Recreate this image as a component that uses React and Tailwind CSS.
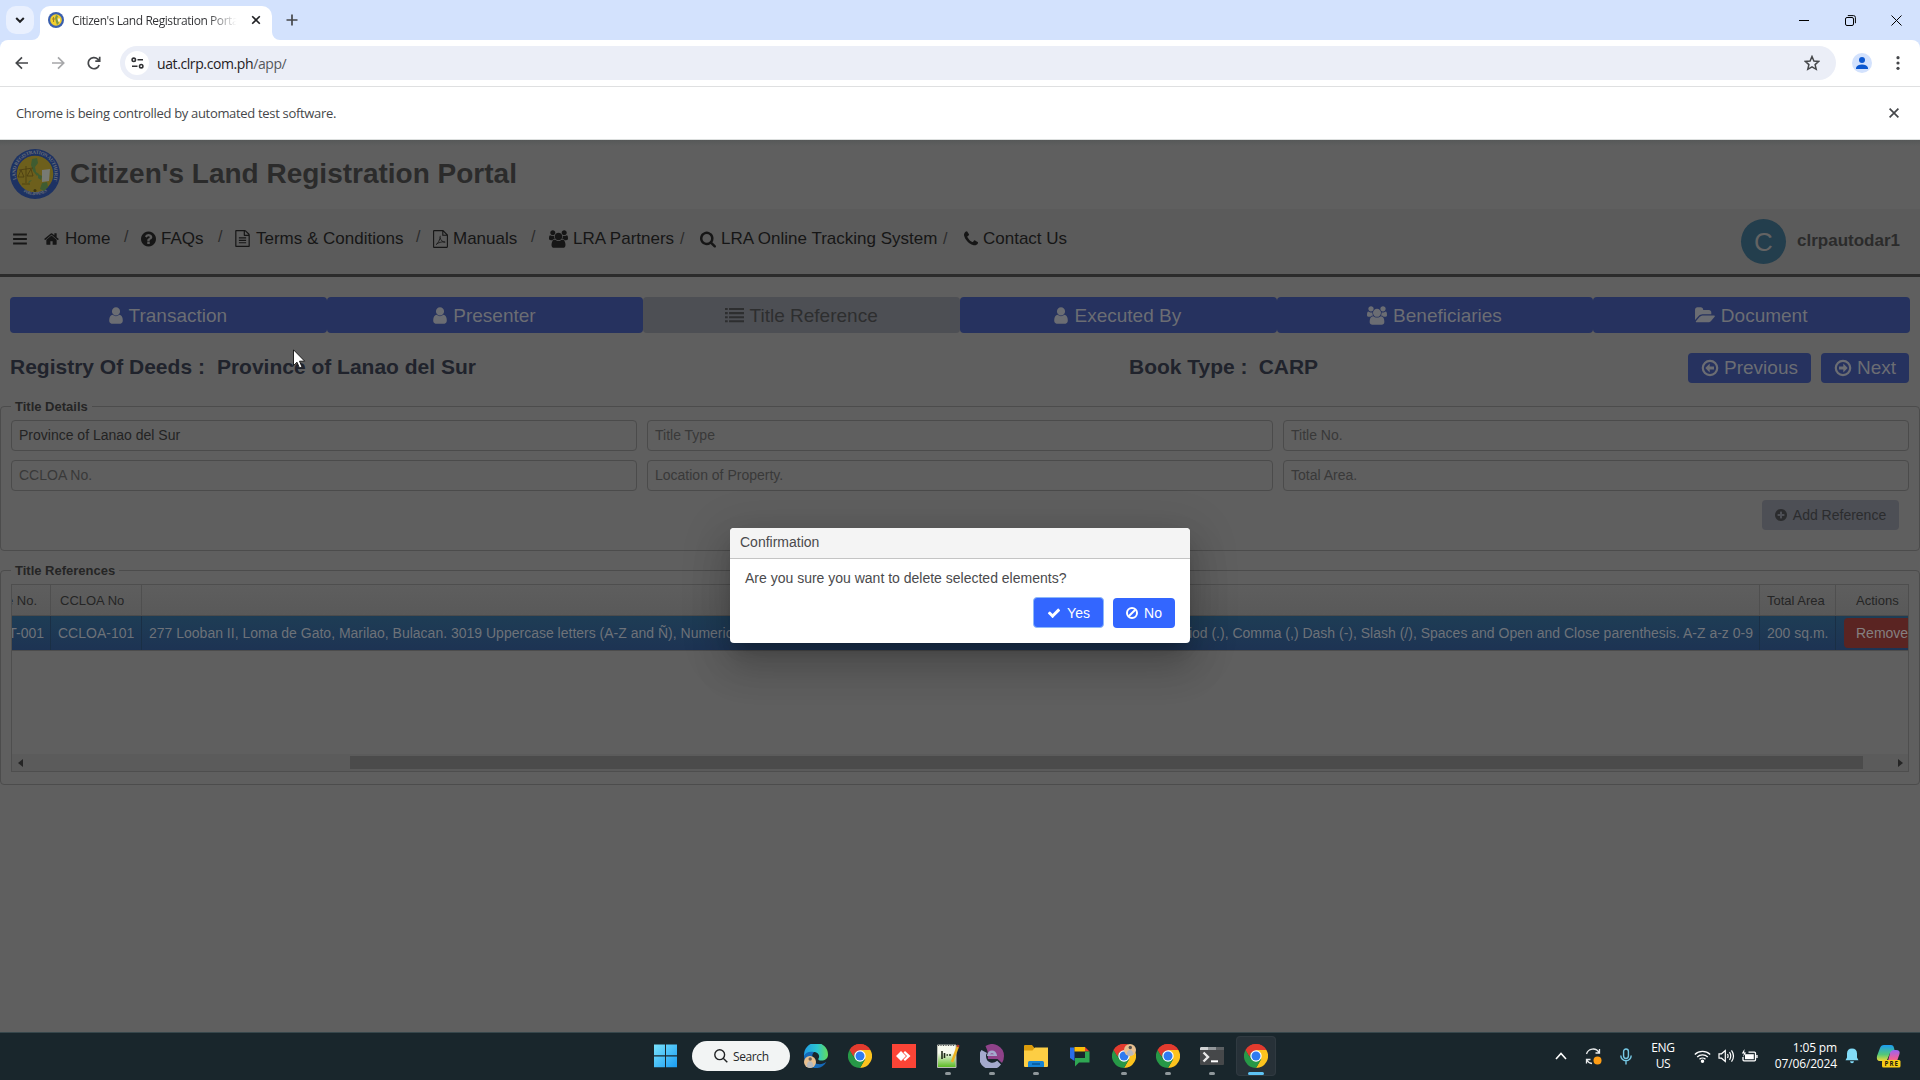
import React from "react";

const PATHS = {
  home: ["64 0 1664 1792", "M1472 992v480q0 26-19 45t-45 19h-384v-384h-256v384h-384q-26 0-45-19t-19-45v-480q0-1 .5-3t.5-3l575-474 575 474q1 2 1 6zm223-69l-62 74q-8 9-21 11h-3q-13 0-21-7l-692-577-692 577q-12 8-24 7-13-2-21-11l-62-74q-8-10-7-23.5t11-21.5l719-599q32-26 76-26t76 26l244 204v-195q0-14 9-23t23-9h192q14 0 23 9t9 23v408l219 182q10 8 11 21.5t-7 23.5z"],
  question: ["128 0 1536 1792", "M1024 1376v-192q0-14-9-23t-23-9h-192q-14 0-23 9t-9 23v192q0 14 9 23t23 9h192q14 0 23-9t9-23zm256-672q0-88-55.5-163t-138.5-116-170-41q-243 0-371 213-15 24 8 42l132 100q7 6 19 6 16 0 25-12 53-68 86-92 34-24 86-24 48 0 85.5 26t37.5 59q0 38-20 61t-68 45q-63 28-115.5 86.5t-52.5 125.5v36q0 14 9 23t23 9h192q14 0 23-9t9-23q0-19 21.5-49.5t54.5-49.5q32-18 49-28.5t46-35 44.5-48 28-60.5 12.5-81zm384 192q0 209-103 385.5t-279.5 279.5-385.5 103-385.5-103-279.5-279.5-103-385.5 103-385.5 279.5-279.5 385.5-103 385.5 103 279.5 279.5 103 385.5z"],
  file: ["128 0 1536 1792", "M1596 380q28 28 48 76t20 88v1152q0 40-28 68t-68 28h-1344q-40 0-68-28t-28-68v-1600q0-40 28-68t68-28h896q40 0 88 20t76 48zm-444-244v376h376q-10-29-22-41l-313-313q-12-12-41-22zm384 1528v-1024h-416q-40 0-68-28t-28-68v-416h-768v1536h1280zm-1024-864q0-14 9-23t23-9h704q14 0 23 9t9 23v64q0 14-9 23t-23 9h-704q-14 0-23-9t-9-23v-64zm736 224q14 0 23 9t9 23v64q0 14-9 23t-23 9h-704q-14 0-23-9t-9-23v-64q0-14 9-23t23-9h704zm0 256q14 0 23 9t9 23v64q0 14-9 23t-23 9h-704q-14 0-23-9t-9-23v-64q0-14 9-23t23-9h704z"],
  users: ["0 0 1920 1792", "M593 896q-162 5-265 128h-134q-82 0-138-40.5t-56-118.5q0-353 124-353 6 0 43.5 21t97.5 42.5 119 21.5q67 0 133-23-5 37-5 66 0 139 81 256zm1071 637q0 120-73 189.5t-194 69.5h-874q-121 0-194-69.5t-73-189.5q0-53 3.5-103.5t14-109 26.5-108.5 43-97.5 62-81 85.5-53.5 111.5-20q10 0 43 21.5t73 48 107 48 135 21.5 135-21.5 107-48 73-48 43-21.5q61 0 111.5 20t85.5 53.5 62 81 43 97.5 26.5 108.5 14 109 3.5 103.5zm-1024-1277q0 106-75 181t-181 75-181-75-75-181 75-181 181-75 181 75 75 181zm704 384q0 159-112.5 271.5t-271.5 112.5-271.5-112.5-112.5-271.5 112.5-271.5 271.5-112.5 271.5 112.5 112.5 271.5zm576 225q0 78-56 118.5t-138 40.5h-134q-103-123-265-128 81-117 81-256 0-29-5-66 66 23 133 23 59 0 119-21.5t97.5-42.5 43.5-21q124 0 124 353zm-128-609q0 106-75 181t-181 75-181-75-75-181 75-181 181-75 181 75 75 181z"],
  search: ["64 0 1664 1792", "M1216 832q0-185-131.5-316.5t-316.5-131.5-316.5 131.5-131.5 316.5 131.5 316.5 316.5 131.5 316.5-131.5 131.5-316.5zm512 832q0 52-38 90t-90 38q-54 0-90-38l-343-342q-179 124-399 124-143 0-273.5-55.5t-225-150-150-225-55.5-273.5 55.5-273.5 150-225 225-150 273.5-55.5 273.5 55.5 225 150 150 225 55.5 273.5q0 220-124 399l343 343q37 37 37 90z"],
  phone: ["192 0 1408 1792", "M1600 1240q0 27-10 70.5t-21 68.5q-21 50-122 106-94 51-186 51-27 0-52.5-3.5t-57.5-12.5-47.5-14.5-55.5-20.5-49-18q-98-35-175-83-128-79-264.5-215.5t-215.5-264.5q-48-77-83-175-3-9-18-49t-20.5-55.5-14.5-47.5-12.5-57.5-3.5-52.5q0-92 51-186 56-101 106-122 25-11 68.5-21t70.5-10q14 0 21 3 18 6 53 76 11 19 30 54t35 63.5 31 53.5q3 4 17.5 25t21.5 35.5 7 28.5q0 20-28.5 50t-62 55-62 53-28.5 46q0 9 5 22.5t8.5 20.5 14 24 11.5 19q76 137 174 235t235 174q2 1 19 11.5t24 14 20.5 8.5 22.5 5q18 0 46-28.5t53-62 55-62 50-28.5q14 0 28.5 7t35.5 21.5 25 17.5q25 15 53.5 31t63.5 35 54 30q70 35 76 53 3 7 3 21z"],
  user: ["256 0 1280 1792", "M1536 1399q0 109-62.5 187t-150.5 78h-854q-88 0-150.5-78t-62.5-187q0-85 8.5-160.5t31.5-152 58.5-131 94-89 134.5-34.5q131 128 313 128t313-128q76 0 134.5 34.5t94 89 58.5 131 31.5 152 8.5 160.5zm-256-887q0 159-112.5 271.5t-271.5 112.5-271.5-112.5-112.5-271.5 112.5-271.5 271.5-112.5 271.5 112.5 112.5 271.5z"],
  folder: ["0 0 1880 1792", "M1879 952q0 31-31 66l-336 396q-43 51-120.5 86.5t-143.5 35.5h-1088q-34 0-60.5-13t-26.5-43q0-31 31-66l336-396q43-51 120.5-86.5t143.5-35.5h1088q34 0 60.5 13t26.5 43zm-343-344v160h-832q-94 0-197 47.5t-164 119.5l-337 396-5 6q0-4-.5-12.5t-.5-12.5v-960q0-92 66-158t158-66h320q92 0 158 66t66 158v32h544q92 0 158 66t66 158z"],
  check: ["0 0 1792 1792", "M1671 566q0 40-28 68l-724 724-136 136q-28 28-68 28t-68-28l-136-136-362-362q-28-28-28-68t28-68l136-136q28-28 68-28t68 28l294 295 656-657q28-28 68-28t68 28l136 136q28 28 28 68z"],
  list: ["0 0 1792 1792", "M0 1344h256v192h-256zM0 960h256v192h-256zM0 576h256v192h-256zM0 192h256v192h-256zM384 1344h1408v192h-1408zM384 960h1408v192h-1408zM384 576h1408v192h-1408zM384 192h1408v192h-1408z"],
  bars: ["128 0 1536 1792", "M128 1280h1536v224h-1536zM128 784h1536v224h-1536zM128 288h1536v224h-1536z"],
  plus: ["128 0 1536 1792", "M1344 960v-128q0-26-19-45t-45-19h-256v-256q0-26-19-45t-45-19h-128q-26 0-45 19t-19 45v256h-256q-26 0-45 19t-19 45v128q0 26 19 45t45 19h256v256q0 26 19 45t45 19h128q26 0 45-19t19-45v-256h256q26 0 45-19t19-45zm320-64q0 209-103 385.5t-279.5 279.5-385.5 103-385.5-103-279.5-279.5-103-385.5 103-385.5 279.5-279.5 385.5-103 385.5 103 279.5 279.5 103 385.5z"],
};

function Glyph({ name, className }) {
  const [box, d] = PATHS[name];
  return (
    <svg viewBox={box} className={"shrink-0 fill-current " + className}>
      <path d={d} />
    </svg>
  );
}

function PdfIcon() {
  return (
    <svg viewBox="0 0 15 18" className="h-[18px] w-[15px] shrink-0 fill-none stroke-current">
      <path d="M.6 1.2Q.6.6 1.2.6H10L14.4 5V16.8Q14.4 17.4 13.8 17.4H1.2Q.6 17.4.6 16.8ZM9.8.8V5.2H14.2" strokeWidth="1.1" />
      <path d="M3 14.8C5 13.5 7.2 9.5 7.3 5.8M7.1 7.5C7.5 10 9.5 12.3 12.2 12.1C9.5 11.4 6.5 12.2 3.5 14" strokeWidth=".8" />
    </svg>
  );
}

function CircleArrow({ right }) {
  return (
    <svg viewBox="0 0 18 18" className={"h-[18px] w-[18px] shrink-0 " + (right ? "-scale-x-100" : "")}>
      <circle cx="9" cy="9" r="7.2" fill="none" stroke="currentColor" strokeWidth="2.2" />
      <path d="M4.3 9 8.7 4.6V7.5H13V10.5H8.7V13.4Z" fill="currentColor" />
    </svg>
  );
}

function Seal({ className }) {
  return (
    <svg viewBox="0 0 50 50" className={className}>
      <defs>
        <path id="sealTop" d="M6.5 30.5A19.5 19.5 0 1 1 43.5 30.5" />
        <path id="sealBottom" d="M9.500 39.500A21.500 21.500 0 0 0 40.500 39.500" />
      </defs>
      <circle cx="25" cy="25" r="25" fill="#1d3263" />
      <circle cx="25" cy="25" r="18.3" fill="#6d5f1c" />
      <g fill="#6b7078" fontFamily="Liberation Serif, serif" fontWeight="700" fontSize="5">
        <text><textPath href="#sealTop" textLength="78">LAND REGISTRATION AUTHORITY</textPath></text>
        <text fontSize="4.400"><textPath href="#sealBottom" startOffset="5" textLength="25">PHILIPPINES</textPath></text>
      </g>
      <path d="M22 10l5-1 1 5-3 4 1 5 3 2-2 2-4-5-2-6zM28 25l4 2-1 4-3-2zM32 34l5-1 1 5-4 4-4-2zM22 31l-4 4 1-3z" fill="#3f5c31" />
      <path d="M16 17V34M9 21L23 19M8 28h6M17 27h6M11 21L8 28M11 21l3 7M21 20l-4 7M21 20l2 7M12 35h8" stroke="#4a3c10" strokeWidth=".8" fill="none" />
      <path d="M32 21l8-1-1 12-7 1z" fill="#777a74" />
      <circle cx="25" cy="41.500" r="1.500" fill="#3c3510" />
    </svg>
  );
}

function Favicon() {
  return (
    <svg viewBox="0 0 16 16" className="h-4 w-4 shrink-0">
      <circle cx="8" cy="8" r="8" fill="#3a5fae" />
      <circle cx="8" cy="8" r="5.8" fill="#f3cf2e" />
      <path d="M8 3l2 1-1 3 2 4-2 2-1-3-1-4z" fill="#7f9a45" />
      <path d="M4 7h3M5.5 5v5" stroke="#a58320" />
      <path d="M10 6.5h2v3h-2z" fill="#f2eed0" />
    </svg>
  );
}

function BrowserChrome() {
  return (
    <header className="h-[140px] bg-white font-['Open_Sans','Noto_Sans',sans-serif]">
      <div className="flex h-10 items-start bg-[#d3e2fd]">
        <div className="ml-1.5 mt-1.5 flex h-7 w-7 items-center justify-center rounded-[10px] bg-[#e9f0fe]">
          <svg viewBox="0 0 10 10" className="h-2.5 w-2.5 fill-none stroke-[#202124] stroke-2"><path d="M1.2 3 5 6.8 8.800 3" /></svg>
        </div>
        <div className="relative ml-1.5 mt-1.5 flex h-[34px] w-[232px] items-center rounded-t-[10px] bg-white pb-1.5 pl-2">
          <svg viewBox="0 0 8 8" className="absolute -left-2 bottom-0 h-2 w-2 fill-white"><path d="M8 0V8H0A8 8 0 0 0 8 0Z" /></svg>
          <svg viewBox="0 0 8 8" className="absolute -right-2 bottom-0 h-2 w-2 fill-white"><path d="M0 0V8H8A8 8 0 0 1 0 0Z" /></svg>
          <Favicon />
          <span className="ml-2 w-[168px] overflow-hidden whitespace-nowrap bg-linear-to-r from-[#303134] from-80% to-white to-98% bg-clip-text pt-px text-[12px] tracking-[-0.43px] text-transparent">Citizen's Land Registration Portal</span>
          <svg viewBox="0 0 10 10" className="ml-[11px] h-2.5 w-2.5 fill-none stroke-[#202124] stroke-[1.6]"><path d="M1.2 1.2 8.8 8.8M8.8 1.2 1.2 8.8" /></svg>
        </div>
        <svg viewBox="0 0 12 12" className="ml-[14px] mt-[14px] h-3 w-3 fill-none stroke-[#45474a] stroke-[1.7]"><path d="M6 .5V11.5M.5 6H11.5" /></svg>
        <div className="ml-auto flex h-10 items-center pr-[18px]">
          <svg viewBox="0 0 10 10" className="h-2.5 w-2.5 stroke-black"><path d="M0 5.5H10" /></svg>
          <svg viewBox="0 0 11 11" className="ml-9 h-[11px] w-[11px] fill-none stroke-black"><rect x=".5" y="2.5" width="8" height="8" rx="1.5" /><path d="M2.8.6H8.5Q10.4.6 10.4 2.5V8.2" /></svg>
          <svg viewBox="0 0 11 11" className="ml-[35px] h-[11px] w-[11px] fill-none stroke-black"><path d="M.5.5 10.5 10.5M10.5.5.5 10.5" /></svg>
        </div>
      </div>
      <div className="bg-[#d3e2fd]">
        <div className="flex h-[47px] items-start rounded-t-lg border-b border-[#dfe0e1] bg-white pt-1.5">
          <div className="flex h-[34px] w-[120px] items-center pl-[15px]">
            <svg viewBox="0 0 14 14" className="h-3.5 w-3.5 fill-none stroke-[#45474a] stroke-[1.7]"><path d="M13 7H1.5M7 1.3 1.3 7 7 12.7" /></svg>
            <svg viewBox="0 0 14 14" className="ml-[22px] h-3.5 w-3.5 fill-none stroke-[#a6a7a9] stroke-[1.7]"><path d="M1 7H12.5M7 1.3 12.7 7 7 12.7" /></svg>
            <svg viewBox="0 0 14 14" className="ml-[22px] h-3.5 w-3.5 fill-none stroke-[#45474a] stroke-[1.7]"><path d="M12.2 9A5.6 5.6 0 1 1 10.8 3.1L12.6 5M12.7.8V5.2H8.3" /></svg>
          </div>
          <div className="flex h-[34px] w-[1716px] items-center rounded-full bg-[#ebeef7] pl-[5px]">
            <div className="flex h-6 w-6 items-center justify-center rounded-full bg-white">
              <svg viewBox="0 0 13 12" className="h-3 w-[13px] fill-none stroke-[#303134] stroke-[1.6]"><circle cx="2.8" cy="2.8" r="1.7" /><path d="M6.5 2.8H12M1 9.2H6.5" /><circle cx="10.2" cy="9.2" r="1.7" /></svg>
            </div>
            <span className="ml-2 text-[14px] tracking-[-0.4px] text-[#1f2023]">uat.clrp.com.ph<span className="text-[#55585c]">/app/</span></span>
            <svg viewBox="0 0 16 16" className="ml-auto mr-4 h-4 w-4 fill-none stroke-[#45474a] stroke-[1.5]"><path d="M8 1.5 9.9 6 14.7 6.4 11.1 9.6 12.2 14.3 8 11.8 3.8 14.3 4.9 9.6 1.3 6.4 6.1 6Z" /></svg>
          </div>
          <div className="ml-4 mt-[7px] flex h-5 w-5 items-center justify-center rounded-full bg-[#d3e2fd]">
            <svg viewBox="0 0 12 12" className="h-3 w-3 fill-[#0b57d0]"><circle cx="6" cy="3" r="3" /><path d="M0 12V10.5Q1.5 7.5 6 7.5T12 10.5V12Z" /></svg>
          </div>
          <svg viewBox="0 0 4 14" className="ml-6 mt-2.5 h-3.5 w-1 fill-[#45474a]"><circle cx="2" cy="1.7" r="1.6" /><circle cx="2" cy="7" r="1.6" /><circle cx="2" cy="12.3" r="1.6" /></svg>
        </div>
      </div>
      <div className="flex h-[53px] items-center justify-between border-b border-[#dcdfde] pl-4 pr-[21px] text-[#45474a]">
        <span className="pt-[2px] text-[13px] tracking-[-0.32px]">Chrome is being controlled by automated test software.</span>
        <svg viewBox="0 0 10 10" className="h-2.5 w-2.5 fill-none stroke-[#45474a] stroke-[1.7]"><path d="M.6.6 9.4 9.4M9.4.6.6 9.4" /></svg>
      </div>
    </header>
  );
}

function NavBar() {
  return (
    <nav className="flex h-[68px] items-start border-b-[3px] border-[#2b2b2b] bg-[#5b5b5b] text-[17px] leading-[18px] text-[#161616]">
      <div className="flex h-[58px] w-full items-center whitespace-nowrap pl-[13px] pt-px">
        <div className="w-[31px]"><Glyph name="bars" className="h-[16px] w-[14px]" /></div>
        <div className="flex w-[80px] items-center"><Glyph name="home" className="mr-[6px] h-4 w-[15px]" />Home</div>
        <div className="w-[17px] pb-1 text-[16px] text-[#2b2b2b]">/</div>
        <div className="flex w-[77px] items-center"><Glyph name="question" className="mr-[5px] h-[18px] w-[15px]" />FAQs</div>
        <div className="w-[17px] pb-1 text-[16px] text-[#2b2b2b]">/</div>
        <div className="flex w-[181px] items-center"><Glyph name="file" className="mr-[6px] h-[17px] w-[15px]" />Terms &amp; Conditions</div>
        <div className="w-[17px] pb-1 text-[16px] text-[#2b2b2b]">/</div>
        <div className="flex w-[98px] items-center"><span className="mr-[5px]"><PdfIcon /></span>Manuals</div>
        <div className="w-[18px] pb-1 text-[16px] text-[#2b2b2b]">/</div>
        <div className="flex w-[131px] items-center"><Glyph name="users" className="mr-[5px] h-[18px] w-[19px]" />LRA Partners</div>
        <div className="w-[20px] text-[16px] text-[#2b2b2b]">/</div>
        <div className="flex w-[243px] items-center"><Glyph name="search" className="mr-[5px] h-[18px] w-[16px]" />LRA Online Tracking System</div>
        <div className="w-[21px] text-[16px] text-[#2b2b2b]">/</div>
        <div className="flex items-center"><Glyph name="phone" className="mr-[5px] h-[18px] w-[14px]" />Contact Us</div>
        <div className="ml-auto mt-[6px] flex items-center pr-5">
          <span className="mr-[11px] flex h-[45px] w-[45px] items-center justify-center rounded-full bg-[#233e4d] text-[26px] text-[#636363]">C</span>
          <span className="-mt-[2px] w-[103px] font-bold text-[#2b2b2b]">clrpautodar1</span>
        </div>
      </div>
    </nav>
  );
}

const STEPS = [
  ["user", "Transaction", "h-[19px] w-[14px]"],
  ["user", "Presenter", "h-[19px] w-[14px]"],
  ["list", "Title Reference", "h-[19px] w-[19px]"],
  ["user", "Executed By", "h-[19px] w-[14px]"],
  ["users", "Beneficiaries", "h-[19px] w-[20px]"],
  ["folder", "Document", "h-[19px] w-[20px]"],
];

function Steps() {
  return (
    <div className="mx-2.5 mt-5 grid grid-cols-6">
      {STEPS.map(([icon, label, size], i) => (
        <div key={label} className={"flex h-9 items-center justify-center gap-1.5 rounded-[4px] pr-px text-[19px] leading-none " + (i === 2 ? "bg-[#4d4f54] text-[#2d2e2f]" : "bg-[#26325f] text-[#6b6d73]")}>
          <Glyph name={icon} className={size} />
          {label}
        </div>
      ))}
    </div>
  );
}

function Field({ children, filled }) {
  return (
    <div className={"flex h-[31px] items-center rounded-[4px] border border-[#4b4b4b] pl-[7px] text-[14px] " + (filled ? "text-[#232323]" : "text-[#393939]")}>{children}</div>
  );
}

function TitleDetails() {
  return (
    <fieldset className="mt-[7px] h-[153px] rounded-[4px] border border-[#4c4c4c] px-2.5">
      <legend className="px-1 text-[13px] leading-[17px] font-bold text-[#252525]">Title Details</legend>
      <div className="mt-[5px] grid grid-cols-3 gap-x-2.5 gap-y-[9px]">
        <Field filled>Province of Lanao del Sur</Field>
        <Field>Title Type</Field>
        <Field>Title No.</Field>
        <Field>CCLOA No.</Field>
        <Field>Location of Property.</Field>
        <Field>Total Area.</Field>
      </div>
      <div className="mr-2.5 mt-[9px] flex justify-end">
        <div className="flex h-[30px] w-[137px] items-center justify-center gap-1.5 rounded-[4px] bg-[#4d4f55] text-[14px] text-[#2b2c2e]">
          <Glyph name="plus" className="h-[14px] w-3" />Add Reference
        </div>
      </div>
    </fieldset>
  );
}

function TitleReferences() {
  return (
    <fieldset className="mt-[11px] h-[223px] rounded-[4px] border border-[#4c4c4c] px-2.5">
      <legend className="px-1 text-[13px] leading-[17px] font-bold text-[#252525]">Title References</legend>
      <div className="mt-[5px] flex h-[188px] flex-col overflow-hidden border border-[#4e4e4e] whitespace-nowrap">
        <div className="flex h-[31px] shrink-0 border-b border-[#4c4c4c] bg-linear-to-b from-[#5e5e5e] to-[#595959] text-[13px] leading-[31px] text-[#252525]">
          <div className="flex w-[39px] justify-end overflow-hidden border-r border-[#4f4f4f] pr-[13px]"><span>Title No.</span></div>
          <div className="w-[91px] border-r border-[#4f4f4f] pl-[9px]">CCLOA No</div>
          <div className="flex-1" />
          <div className="w-[77px] border-x border-[#4f4f4f] pl-[7px]">Total Area</div>
          <div className="w-[72px] pl-[20px]">Actions</div>
        </div>
        <div className="flex h-[35px] shrink-0 border-b border-[#4c4c4c] bg-linear-to-b from-[#1e3d55] to-[#1d3353] text-[14px] leading-[34px] text-[#6d7279]">
          <div className="flex w-[39px] justify-end overflow-hidden border-r border-[#1a2f45] pr-[6px]"><span>T-001</span></div>
          <div className="w-[91px] border-r border-[#1a2f45] pl-[7px]">CCLOA-101</div>
          <div className="flex flex-1 justify-between pl-[7px] pr-[6px]">
            <span>277 Looban II, Loma de Gato, Marilao, Bulacan. 3019 Uppercase letters (A-Z and Ñ), Numerical</span>
            <span>Period (.), Comma (,) Dash (-), Slash (/), Spaces and Open and Close parenthesis. A-Z a-z 0-9</span>
          </div>
          <div className="w-[77px] border-x border-[#1a2f45] pl-[7px]">200 sq.m.</div>
          <div className="w-[72px] overflow-hidden pl-[8px] pt-[2px]">
            <div className="h-[30px] w-[78px] rounded-[4px] bg-[#5a2422] pl-3 leading-[30px] text-[#858080]">Remove</div>
          </div>
        </div>
        <div className="mt-auto flex h-[17px] shrink-0 items-center bg-[#5b5b5b] px-1">
          <div className="w-[334px]"><svg viewBox="0 0 5 8" className="ml-[2px] h-2 w-[5px] fill-[#252525]"><path d="M5 0V8L0 4Z" /></svg></div>
          <div className="h-[13px] w-[1513px] bg-[#4b4b4b]" />
          <svg viewBox="0 0 5 8" className="ml-auto mr-px h-2 w-[5px] fill-[#252525]"><path d="M0 0V8L5 4Z" /></svg>
        </div>
      </div>
    </fieldset>
  );
}

function Dialog() {
  return (
    <div className="absolute left-[730px] top-[528px] h-[115px] w-[460px] rounded-[4px] bg-white text-[14px] text-[#4a4a4c] shadow-[0_11px_15px_-7px_rgba(0,0,0,.2),0_24px_38px_3px_rgba(0,0,0,.14),0_9px_46px_8px_rgba(0,0,0,.12)]">
      <div className="h-[31px] rounded-t-[4px] border-b border-[#c4c4c4] bg-[#f4f4f4] pl-2.5 leading-[29px]">Confirmation</div>
      <p className="mt-[9px] pl-[15px] leading-[20px]">Are you sure you want to delete selected elements?</p>
      <div className="mt-[9px] flex items-start justify-end gap-[9px] pr-[15px] text-white">
        <div className="flex h-[31px] w-[71px] items-center justify-center gap-1.5 rounded-[4px] border border-[#8db8fa] bg-[#3366ff] pt-px"><Glyph name="check" className="h-[14px] w-[14px]" />Yes</div>
        <div className="mt-px flex h-[30px] w-[62px] items-center justify-center gap-1.5 rounded-[4px] bg-[#3366ff]">
          <svg viewBox="0 0 12 12" className="h-3 w-3 fill-none stroke-white stroke-2"><circle cx="6" cy="6" r="5" /><path d="M2.7 9.3 9.3 2.7" /></svg>No
        </div>
      </div>
    </div>
  );
}

function ChromeLogo({ avatar }) {
  return (
    <svg viewBox="0 0 24 24" className="h-6 w-6">
      <path d="M12 12 1.6 6A12 12 0 0 1 22.4 6Z" fill="#e33b2e" />
      <path d="M12 6H22.4A12 12 0 0 1 12 24L17.2 15Z" fill="#fcc31e" />
      <path d="M1.6 6A12 12 0 0 0 12 24L17.2 15 12 12 6.8 15Z" fill="#279847" />
      <path d="M1.6 6 6.8 15 8 9 4 4Z" fill="#279847" />
      <path d="M1.6 6A12 12 0 0 1 22.4 6H12A6 6 0 0 0 6.2 10.500L5.500 12.500Z" fill="#e33b2e" />
      <circle cx="12" cy="12" r="5.7" fill="#fff" />
      <circle cx="12" cy="12" r="4.5" fill="#2f7bf0" />
      {avatar && <g><circle cx="18" cy="6" r="6" fill="#e9c08f" /><circle cx="18.3" cy="3.5" r="1.7" fill="#56514e" /><path d="M14.5 10.8Q15 6 18 6T21.5 10.8Q18 13 14.5 10.8Z" fill="#b9b9bc" /></g>}
    </svg>
  );
}

function EdgeLogo() {
  return (
    <svg viewBox="0 0 24 24" className="h-6 w-6">
      <defs><linearGradient id="edgeTop" x1="0" x2="1"><stop offset="0" stopColor="#1f9be6" /><stop offset=".55" stopColor="#2cc5cf" /><stop offset="1" stopColor="#63dc5c" /></linearGradient></defs>
      <path d="M0 11A12 12 0 0 1 24 10.5C24 14.5 21 16.5 17.5 16.5C14.5 16.5 13.6 15.5 14.8 14C16 11 13.5 8 9.5 8C5 8 1.5 10 0 13Z" fill="url(#edgeTop)" />
      <path d="M0 12C1.5 8.5 6 7 10 8.2C7 10 7.5 19 14 20C17 20.5 20 19.5 22.3 18C19.5 23 15 24.5 10.5 24C4 23 0 18 0 12Z" fill="#1569b8" />
      <circle cx="6" cy="18" r="6" fill="#e9c08f" /><circle cx="6.2" cy="15" r="1.7" fill="#6d645e" />
      <path d="M2.5 22.5Q3 17.3 6 17.3T9.5 22.5Q6 25 2.5 22.5Z" fill="#b9b9bc" />
    </svg>
  );
}

function TaskIcon({ children, dot, active }) {
  return (
    <div className={"flex h-10 w-10 flex-col items-center rounded-[4px] pt-2 " + (active ? "bg-[#273138] outline outline-1 -outline-offset-1 outline-[#303a41]" : "")}>
      <div className="h-6 w-6">{children}</div>
      {dot && <div className="mt-1 h-[3px] w-1.5 rounded-full bg-[#8f979b]" />}
      {active && <div className="mt-1 h-[3px] w-4 rounded-full bg-[#5ec4f5]" />}
    </div>
  );
}

function Taskbar() {
  return (
    <footer className="flex h-12 items-center border-t border-[#37474c] bg-[#19262c] pb-px font-['Open_Sans','Noto_Sans',sans-serif] text-white">
      <div className="ml-[646px] flex items-center gap-1">
        <TaskIcon>
          <svg viewBox="0 0 24 24" className="h-6 w-6"><defs><linearGradient id="win" x1="0" y1="0" x2="1" y2="1"><stop offset="0" stopColor="#79e2fc" /><stop offset="1" stopColor="#199cf3" /></linearGradient></defs><path d="M0 .5H11V11.3H0ZM12 .5H23V11.3H12ZM0 12.5H11V23.3H0ZM12 12.5H23V23.3H12Z" fill="url(#win)" /></svg>
        </TaskIcon>
        <div className="mx-0.5 flex h-[30px] w-[98px] items-center rounded-full bg-[#f2f4f4] pl-[22px] text-[12px] text-[#26282a]">
          <svg viewBox="0 0 14 14" className="mr-[5px] h-3.5 w-3.5 fill-none stroke-[#202224] stroke-[1.4]"><circle cx="5.7" cy="5.7" r="4.9" /><path d="M9.2 9.2 13.3 13.3" /></svg>
          <span className="pt-px tracking-[-0.4px]">Search</span>
        </div>
        <TaskIcon><EdgeLogo /></TaskIcon>
        <TaskIcon><ChromeLogo /></TaskIcon>
        <TaskIcon>
          <svg viewBox="0 0 24 24" className="h-6 w-6"><path d="M0 0H24V24H0Z" fill="#fb4436" /><path d="M4 12 9 7 14 12 9 17ZM11.5 8.5 13 7 18.500 12 13 17 11.5 15.5 15 12Z" fill="#fff" /></svg>
        </TaskIcon>
        <TaskIcon dot>
          <svg viewBox="0 0 24 24" className="h-6 w-6"><defs><linearGradient id="npp" x1="0" y1="0" x2="0" y2="1"><stop offset=".35" stopColor="#f7faee" /><stop offset="1" stopColor="#58b91e" /></linearGradient></defs><path d="M1.5 1H20V23.5H1.5Z" fill="url(#npp)" stroke="#b9bdb5" /><path d="M2 1.5H19" stroke="#555" strokeDasharray="1 1.5" /><path d="M6 7V15M8.5 9V14M10.5 11H12M13 11H15" stroke="#202a18" strokeWidth="1.6" /><path d="M22 2 16 18" stroke="#edb422" strokeWidth="2.5" /><path d="M21.5.5 23.5 1.5 22.8 3.5 20.8 2.7Z" fill="#b9392b" /></svg>
        </TaskIcon>
        <TaskIcon dot>
          <svg viewBox="0 0 24 24" className="h-6 w-6"><path d="M5.500 2A12 12 0 0 1 24 12Q24 16 22 19L17.500 15H8L7.500 7Z" fill="#8f4289" /><path d="M1.500 6A12 12 0 0 0 21 20.500L17.200 16.800Q14 19.500 10.500 18.500Q6 17 6 12Q6 10 7 9Z" fill="#a4aacd" /><path d="M7 11.500Q8 6.500 12 6.500T17 11.500V12H7Z" fill="#a4aacd" /><path d="M10 10.300Q12 8 14 10.300Z" fill="#8f4289" /></svg>
        </TaskIcon>
        <TaskIcon dot>
          <svg viewBox="0 0 24 24" className="h-6 w-6"><path d="M0 2Q0 1 1 1H8L10.5 4H23Q24 4 24 5V22H0Z" fill="#dc9c0c" /><path d="M0 6.5H8.5L11 3.5H24V22Q24 23 23 23H1Q0 23 0 22Z" fill="#fdce44" /><path d="M4 23V18.5Q4 17 5.5 17H18.5Q20 17 20 18.5V23Z" fill="#1683d4" /><path d="M8 20H16" stroke="#075592" strokeWidth="1.5" /></svg>
        </TaskIcon>
        <TaskIcon>
          <svg viewBox="0 0 24 24" className="h-6 w-6"><path d="M2 3.5H6.5V17L2 14Z" fill="#2b6de8" /><path d="M6.5 3H17V7.5H6.5Z" fill="#fbbc09" /><path d="M17 3 21.5 7.5H17Z" fill="#e8402f" /><path d="M17 7.5H21.5V18.5H11L7 22.5V14H17Z" fill="#2fa753" /></svg>
        </TaskIcon>
        <TaskIcon dot><ChromeLogo avatar /></TaskIcon>
        <TaskIcon dot><ChromeLogo /></TaskIcon>
        <TaskIcon dot>
          <svg viewBox="0 0 24 24" className="h-6 w-6"><rect y="3" width="24" height="18" rx="1" fill="#46484a" /><path d="M1 3H8V6H0V4Z" fill="#d0d2d3" /><path d="M8 3H16V6H8Z" fill="#93979a" /><path d="M16 3H24V6H16Z" fill="#5c6063" /><path d="M3.5 8.5 8 13 3.5 17.5" fill="none" stroke="#e8e8e8" strokeWidth="2.4" /><path d="M11 17.3H18" stroke="#fff" strokeWidth="2" /></svg>
        </TaskIcon>
        <TaskIcon active><ChromeLogo /></TaskIcon>
      </div>
      <div className="ml-auto flex items-center pr-[19px]">
        <svg viewBox="0 0 12 8" className="h-2 w-3 fill-none stroke-white stroke-[1.6]"><path d="M1 7 6 1.5 11 7" /></svg>
        <svg viewBox="0 0 17 17" className="ml-[18px] h-[17px] w-[17px] fill-none stroke-[#e8eaeb] stroke-[1.3]"><path d="M1.5 6A6.8 6.8 0 0 1 14 4.5M14.5 1V5H10.5M7 15.5A6.8 6.8 0 0 1 1.8 12M5.5 11.5H1.5V15.5" /><circle cx="12.5" cy="12.5" r="4" className="fill-[#ff9d14] stroke-none" /></svg>
        <svg viewBox="0 0 12 17" className="ml-[18px] h-[17px] w-3 fill-none stroke-[#76c8e4] stroke-[1.4]"><rect x="3.6" y="1" width="4.8" height="9.5" rx="2.4" /><path d="M.8 7.5A5.2 5.2 0 0 0 11.2 7.5M6 13V16.5" /></svg>
        <div className="ml-[17px] w-[28px] text-center text-[12px] leading-4 tracking-[-0.3px]">ENG<br />US</div>
        <svg viewBox="0 0 17 13" className="ml-[17px] h-[13px] w-[17px] fill-none stroke-white stroke-[1.3]"><path d="M.8 4.5A11 11 0 0 1 16.2 4.5M3.2 7A7.5 7.5 0 0 1 13.8 7M5.5 9.3A4.3 4.3 0 0 1 11.5 9.3" /><circle cx="8.5" cy="11.2" r="1.1" className="fill-white" /></svg>
        <svg viewBox="0 0 17 14" className="ml-[7px] h-3.5 w-[17px] fill-none stroke-white stroke-[1.2]"><path d="M1 4.8H3.5L7.3 1.5V12.5L3.5 9.2H1ZM9.5 5Q10.7 7 9.5 9M11.5 3.2Q14 7 11.5 10.8M13.5 1.3Q17.5 7 13.5 12.7" /></svg>
        <svg viewBox="0 0 17 14" className="ml-[6px] h-3.5 w-[17px] fill-none stroke-white stroke-[1.3]"><path d="M7.5 3.2H13.5Q14.5 3.2 14.5 4.2V10.8Q14.5 11.8 13.5 11.8H3Q2 11.8 2 10.8V8M16 6V9" /><path d="M4 5.200H12.800V10.200H4Z" className="fill-white stroke-none" /><path d="M3.5 0 .8 4.5H3L2 8 5.2 3.5H3.2Z" className="fill-white stroke-none" /></svg>
        <div className="ml-[15px] w-[64px] text-right text-[12px] leading-4 tracking-[-0.15px] whitespace-nowrap">1:05 pm<br />07/06/2024</div>
        <svg viewBox="0 0 14 16" className="ml-2 h-4 w-3.5 fill-[#82dcf8]"><path d="M7 .5Q11.8.5 12 5.5V9.5L13.5 12.3H.5L2 9.5V5.5Q2.2.5 7 .5ZM5 13.3H9Q8.8 15.3 7 15.3T5 13.3Z" /></svg>
        <svg viewBox="0 0 25 24" className="ml-[17px] h-6 w-[25px]">
          <defs><linearGradient id="copA" x1="0" y1="0" x2="0" y2="1"><stop offset="0" stopColor="#1b9cf2" /><stop offset=".6" stopColor="#54c878" /><stop offset="1" stopColor="#f2dc36" /></linearGradient><linearGradient id="copB" x1="0" y1="0" x2="0" y2="1"><stop offset="0" stopColor="#9a63f3" /><stop offset=".6" stopColor="#ef5f99" /><stop offset="1" stopColor="#ff9258" /></linearGradient></defs>
          <path d="M13 6H20Q24.5 6 23.5 10L21 17Q20 20 17 20H8Q11 20 12 17L14 9Z" fill="url(#copB)" />
          <path d="M8 1H15Q17.5 1 18 4L18.5 6Q15 6 14 9L11.5 15Q11 17 9 17H4Q0 17 1 12L4 4Q5 1 8 1Z" fill="url(#copA)" />
          <rect x="6" y="16" width="18.5" height="7.5" rx="1.5" fill="#f8cc16" />
          <text x="8.500" y="22" fontSize="6.2" fontWeight="700" textLength="13.500" fill="#1c1a10">PRE</text>
        </svg>
      </div>
    </footer>
  );
}

export default function App() {
  return (
    <div className="relative flex h-[1080px] w-[1920px] flex-col overflow-hidden bg-[#5f5f5f] font-['Liberation_Sans',Arial,sans-serif]">
      <BrowserChrome />
      <main className="flex-1">
        <div className="flex h-[69px] items-center bg-linear-to-b from-[#565858] to-[#5f5f5f] to-[6px] pb-px pl-2.5">
          <Seal className="h-[50px] w-[50px]" />
          <h1 className="ml-2.5 text-[28px] font-bold text-[#2b2b2b]">Citizen's Land Registration Portal</h1>
        </div>
        <NavBar />
        <Steps />
        <div className="mt-5 flex h-[30px] items-center text-[21px] font-bold text-[#20232c]">
          <div className="flex w-[1129px] gap-3 whitespace-pre pb-[2px] pl-2.5"><span>Registry Of Deeds :</span><span>Province of Lanao del Sur</span></div>
          <div className="flex gap-[11px] pb-[2px]"><span>Book Type :</span><span>CARP</span></div>
          <div className="ml-auto flex gap-2.5 pr-[11px] text-[19px] font-normal text-[#6b6d73]">
            <div className="flex h-[30px] w-[123px] items-center justify-center gap-[5px] rounded-[4px] bg-[#26325f]"><CircleArrow />Previous</div>
            <div className="flex h-[30px] w-[88px] items-center justify-center gap-[5px] rounded-[4px] bg-[#26325f]"><CircleArrow right />Next</div>
          </div>
        </div>
        <div className="pt-[8px]">
          <TitleDetails />
          <TitleReferences />
        </div>
      </main>
      <Taskbar />
      <Dialog />
      <svg viewBox="0 0 13 20" className="absolute left-[293px] top-[349px] h-5 w-[13px]"><path d="M.5.8V16.5L4 13.2 6.5 19 9 18 6.5 12.2H11.7Z" fill="#fff" stroke="#111" strokeWidth=".9" /></svg>
    </div>
  );
}
